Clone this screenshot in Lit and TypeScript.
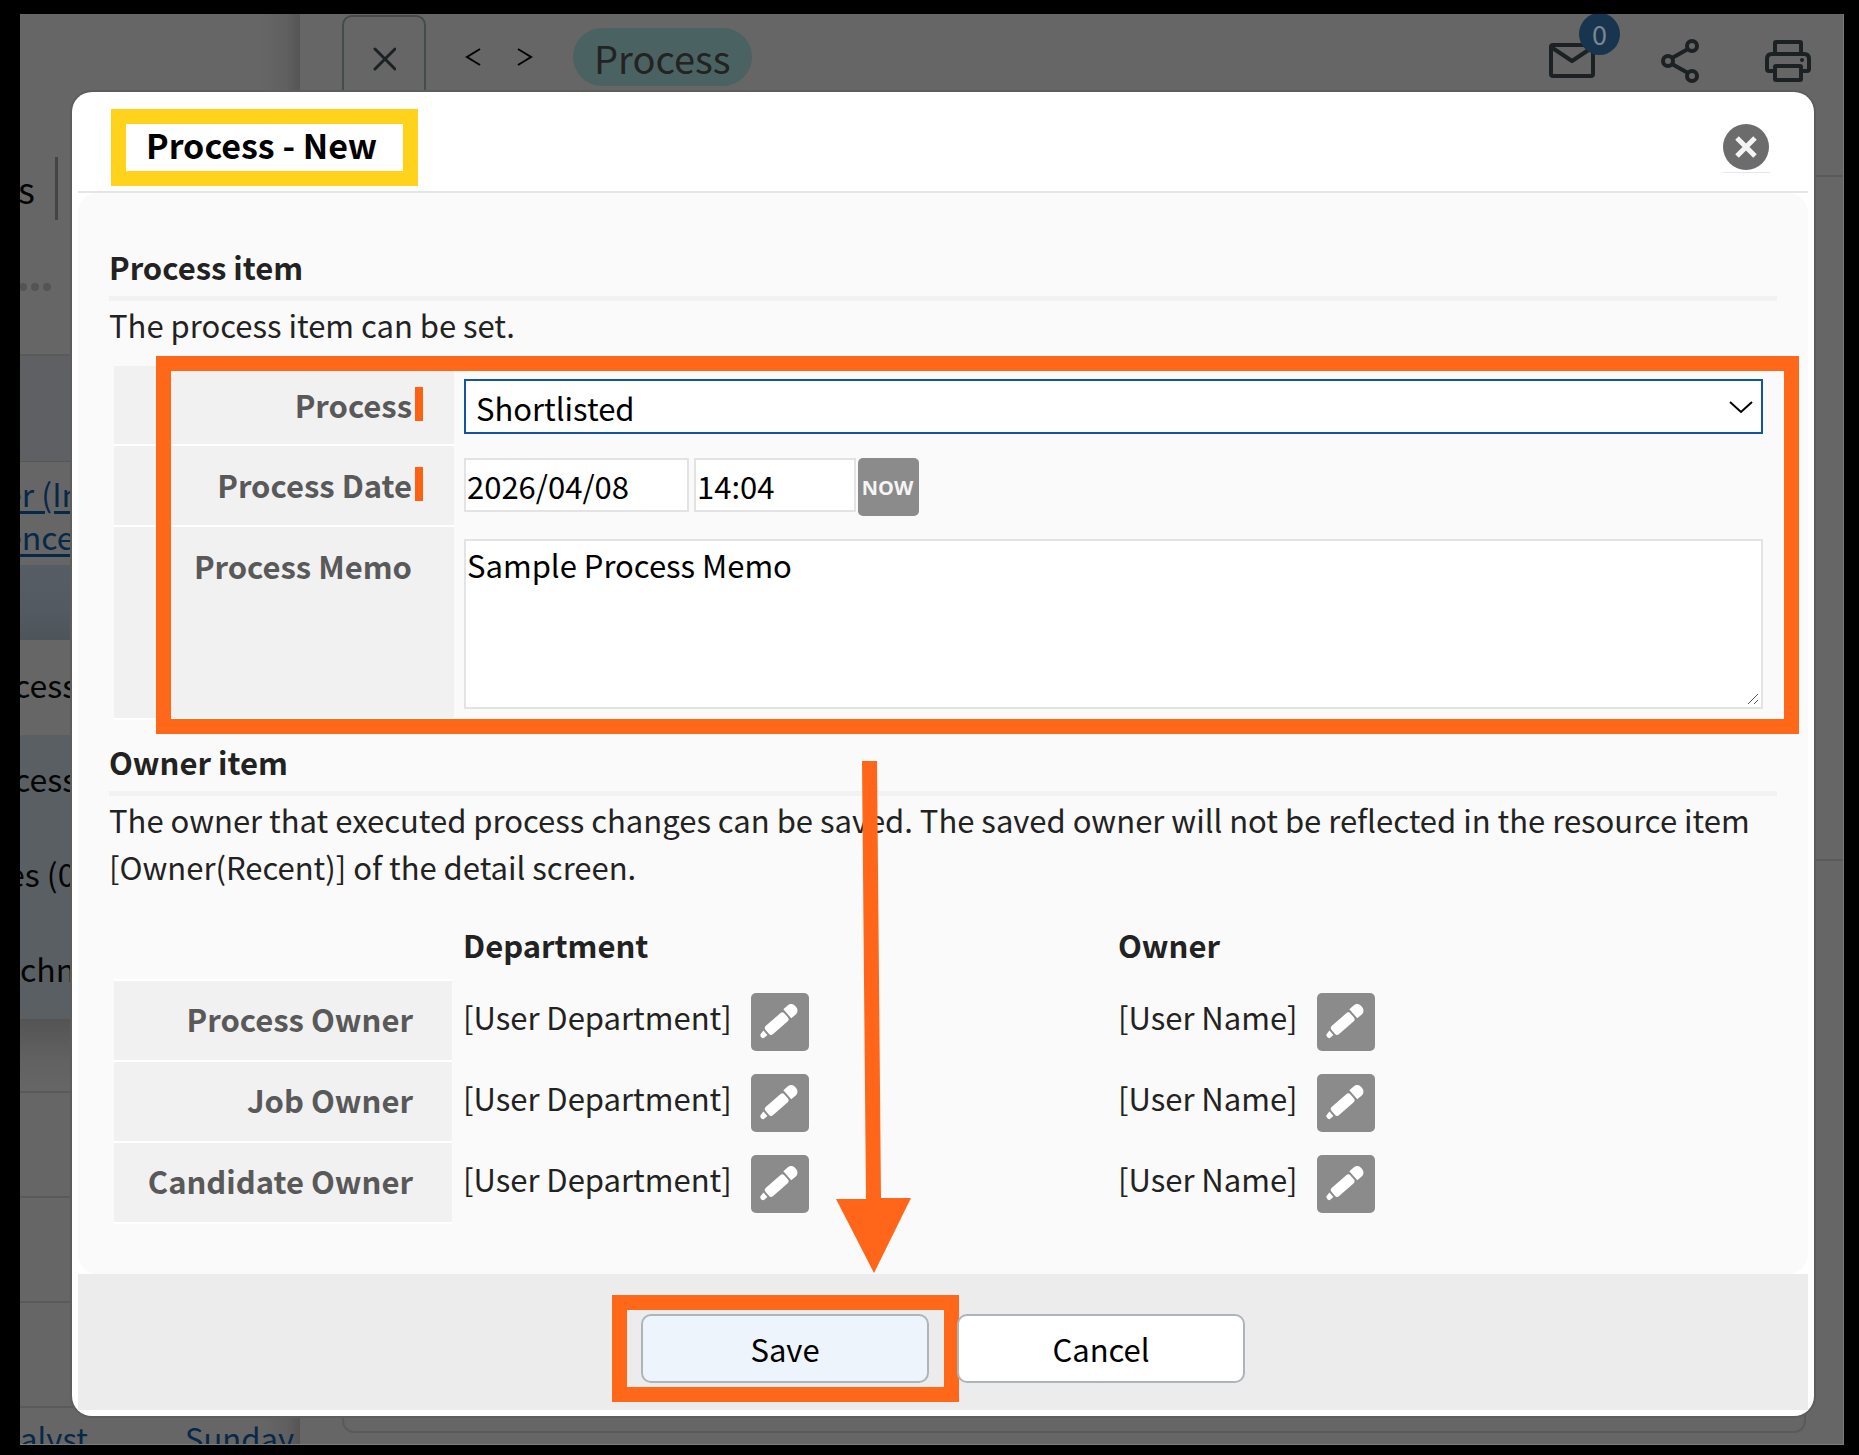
import { LitElement, html, css } from "lit";
import { customElement } from "lit/decorators.js";

const font = css`"Noto Sans CJK JP", "Noto Sans", sans-serif`;

const pencilIcon = html`
  <svg class="pencil" viewBox="0 0 58 58" aria-hidden="true">
    <g transform="translate(28 28) rotate(-41)" fill="#fff">
      <rect x="-16" y="-5" width="25" height="11" rx="3" />
      <path d="M11 -6h6a5 5 0 0 1 5 5v2a5 5 0 0 1-5 5h-6z" />
      <path d="M-18 -3v6l-5 0q-2 -3 0 -5z" />
    </g>
  </svg>
`;

@customElement("backdrop-page")
class BackdropPage extends LitElement {
  static styles = css`
    :host {
      display: grid;
      grid-template-columns: 280px 1fr;
      overflow: hidden;
      background: #666;
      color: #050505;
      font: 32px/48px ${font};
    }
    .side {
      display: flex;
      flex-direction: column;
      overflow: hidden;
      white-space: nowrap;
      min-height: 0;
      background: linear-gradient(to left, #555 0, #606060 14px, #666 40px);
    }
    .top {
      box-sizing: border-box;
      flex: none;
      height: 342px;
      padding-top: 143px;
      border-bottom: 2px solid #5a5a5a;
    }
    .tab {
      display: flex;
      width: 35px;
      height: 63px;
      border-right: 3px solid #444;
      font-size: 36px;
      line-height: 62px;
    }
    .tab span {
      margin-left: -2px;
    }
    .dots {
      display: block;
      width: 32px;
      height: 12px;
      margin-top: 61px;
    }
    .head {
      flex: none;
      height: 105px;
      background: #5e6063;
      border-bottom: 1px solid #565656;
    }
    .links {
      box-sizing: border-box;
      flex: none;
      height: 103px;
      padding-top: 10px;
      line-height: 43px;
    }
    a {
      color: #082848;
      text-decoration-thickness: 3px;
      text-underline-offset: 4px;
    }
    .links a {
      display: block;
      margin-left: -16px;
    }
    .band {
      flex: none;
      height: 75px;
      background: linear-gradient(#565d64, #535a61 60%, #4d545a);
    }
    .item {
      box-sizing: border-box;
      flex: none;
      height: 95px;
      padding-top: 20px;
      margin-left: -6px;
    }
    .group {
      flex: none;
      height: 284px;
      background: #5a5f63;
    }
    .group .item {
      padding-top: 19px;
    }
    .group .wide {
      margin-left: -13px;
    }
    .group .inset {
      margin-left: 0;
    }
    .line {
      box-sizing: border-box;
      flex: none;
      height: 105px;
      border-bottom: 2px solid #5a5a5a;
    }
    .line.first {
      height: 74px;
      background: linear-gradient(#545454, #626262 60%, transparent);
    }
    .last {
      display: grid;
      grid-template-columns: 165px 1fr;
      padding: 5px 0 0;
      font-size: 31px;
      line-height: 50px;
    }
    .last a {
      text-decoration: none;
    }
    .panel {
      display: flex;
      flex-direction: column;
      min-width: 0;
      min-height: 0;
      background: #666;
      border-right: 1px solid #7c7c7c;
    }
    .bar {
      display: flex;
      box-sizing: border-box;
      flex: none;
      height: 163px;
      border-bottom: 2px solid #5a5a5a;
      padding: 1px 31px 0 42px;
    }
    button {
      padding: 0;
      border: 0;
      background: none;
      color: inherit;
      font: inherit;
      flex: none;
    }
    svg {
      display: block;
    }
    .close {
      display: grid;
      place-items: center;
      width: 84px;
      height: 88px;
      box-sizing: border-box;
      border: 2px solid #444c4c;
      border-radius: 10px;
    }
    .nav {
      display: flex;
      gap: 34px;
      margin: 32px 39px 0 38px;
      height: 20px;
    }
    .pill {
      height: 58px;
      margin-top: 13px;
      padding: 0 21px;
      border-radius: 29px;
      background: #4b6262;
      color: #232323;
      font-size: 38px;
      line-height: 60px;
    }
    .tools {
      display: flex;
      align-items: flex-start;
      gap: 64px;
      margin-left: auto;
      padding-top: 23px;
    }
    .mail {
      position: relative;
      margin-top: 4px;
    }
    .badge {
      position: absolute;
      left: 31px;
      top: -29px;
      width: 41px;
      height: 42px;
      border-radius: 50%;
      background: #18344f;
      color: #7d8690;
      font-size: 27px;
      line-height: 42px;
      text-align: center;
    }
    .section {
      flex: none;
      height: 647px;
      border-bottom: 2px solid #5a5a5a;
    }
    .card {
      height: 605px;
      margin: 0 37px 0 42px;
      border: 2px solid #5a5a5a;
      border-top: 0;
      border-radius: 12px;
    }
    .section {
      height: 682px;
    }
    .card {
      height: 570px;
    }
  `;

  render() {
    return html`
      <div class="side">
        <div class="top">
          <div class="tab"><span>s</span></div>
          <svg class="dots" viewBox="0 0 32 12" fill="#545454" aria-hidden="true">
            <circle cx="3" cy="6" r="4" />
            <circle cx="15" cy="6" r="4" />
            <circle cx="27" cy="6" r="4" />
          </svg>
        </div>
        <div class="head"></div>
        <div class="links">
          <a href="#">er (In</a>
          <a href="#">ence</a>
        </div>
        <div class="band"></div>
        <div class="item">cess</div>
        <div class="group">
          <div class="item">cess</div>
          <div class="item wide">es (0</div>
          <div class="item inset">chn</div>
        </div>
        <div class="line first"></div>
        <div class="line"></div>
        <div class="line"></div>
        <div class="line"></div>
        <div class="last"><a href="#">alyst</a><a href="#">Sunday</a></div>
      </div>
      <div class="panel">
        <div class="bar">
          <button class="close" aria-label="Close panel">
            <svg width="24" height="24" viewBox="0 0 24 24" stroke="#1c2124" stroke-width="3" stroke-linecap="round">
              <path d="M3 2 23 22M23 2 3 22" />
            </svg>
          </button>
          <div class="nav">
            <button aria-label="Previous">
              <svg width="18" height="20" viewBox="0 0 18 20" fill="none" stroke="#000" stroke-width="2"><path d="M16 2 3 10 16 18" /></svg>
            </button>
            <button aria-label="Next">
              <svg width="18" height="20" viewBox="0 0 18 20" fill="none" stroke="#000" stroke-width="2"><path d="M2 2 15 10 2 18" /></svg>
            </button>
          </div>
          <span class="pill">Process</span>
          <div class="tools">
            <button class="mail" aria-label="Mail">
              <svg width="48" height="36" viewBox="0 0 48 36" fill="none" stroke="#1c2124" stroke-width="4" stroke-linejoin="round">
                <rect x="3" y="3" width="42" height="31" rx="2" />
                <path d="M3 5 24 19 45 5" />
              </svg>
              <span class="badge">0</span>
            </button>
            <button aria-label="Share">
              <svg width="40" height="46" viewBox="0 0 40 46" fill="none" stroke="#1c2124" stroke-width="4">
                <circle cx="32" cy="8" r="5" />
                <circle cx="8" cy="23" r="5" />
                <circle cx="32" cy="38" r="5" />
                <path d="M12 20 28 11M12 26 28 35" />
              </svg>
            </button>
            <button aria-label="Print">
              <svg width="48" height="46" viewBox="0 0 48 46" fill="none" stroke="#1c2124" stroke-width="4" stroke-linejoin="round">
                <path d="M11 16V5q0 -1 1 -1h24q1 0 1 1v11" />
                <path d="M11 33H5q-2 0 -2 -2V21q0 -5 5 -5h32q5 0 5 5v10q0 2 -2 2h-6" />
                <rect x="11" y="28" width="26" height="14" rx="1" />
                <circle cx="38" cy="22" r="2" fill="#1c2124" stroke="none" />
              </svg>
            </button>
          </div>
        </div>
        <div class="section"></div>
        <div class="card"></div>
      </div>
    `;
  }
}

@customElement("process-dialog")
class ProcessDialog extends LitElement {
  static styles = css`
    :host {
      display: block;
      box-sizing: border-box;
      padding: 0 6px 6px;
      border-radius: 20px;
      background: #fff;
      box-shadow: 0 0 0 2px #5d5d5d;
      color: #222;
      font: 31px/48px ${font};
    }
    header {
      display: flex;
      align-items: flex-start;
      justify-content: space-between;
      padding: 17px 38px 5px 33px;
      border-bottom: 2px solid #e5e5e5;
    }
    h1,
    h2 {
      margin: 0;
      font-size: 31px;
      font-weight: 700;
    }
    h1 {
      padding: 0 26px 5px 20px;
      border: 15px solid #ffd21c;
      color: #000;
      font-size: 34px;
      line-height: 42px;
    }
    h2 {
      padding: 1px 0 5px;
      border-bottom: 5px solid #f2f2f2;
    }
    p {
      margin: 0;
      line-height: 47px;
    }
    button,
    input,
    select,
    textarea {
      box-sizing: border-box;
      margin: 0;
      border-radius: 0;
      color: #000;
      font: inherit;
      line-height: normal;
    }
    svg {
      display: block;
    }
    .dismiss {
      margin-top: 14px;
      padding: 0 0 1px;
      border: 0;
      border-bottom: 1px solid #e3e8f0;
      background: none;
    }
    .body {
      padding: 49px 31px 50px;
      border-radius: 20px;
      background: #fafafa;
    }
    .form {
      position: relative;
      margin: 18px 0 17px 5px;
    }
    .row {
      display: grid;
      grid-template-columns: 340px 1fr;
      min-height: 80px;
    }
    .label {
      display: flex;
      justify-content: flex-end;
      gap: 3px;
      padding: 15px 31px 0 0;
      border-bottom: 2px solid #fff;
      background: #f1f1f1;
      color: #595959;
      font-weight: 700;
    }
    .label.optional {
      padding-right: 42px;
    }
    .required {
      width: 8px;
      height: 34px;
      margin-top: 6px;
      background: #ff6112;
    }
    .field {
      display: flex;
      align-items: flex-start;
      padding: 12px 14px 11px 10px;
    }
    .picker {
      display: grid;
      flex: 1;
      align-items: center;
      padding-top: 1px;
    }
    .picker > * {
      grid-area: 1 / 1;
    }
    select {
      width: 100%;
      height: 55px;
      padding: 2px 48px 0 10px;
      border: 2px solid #1156a0;
      background: #fff;
      appearance: none;
      outline: 0;
    }
    .chevron {
      justify-self: end;
      margin: 0 10px 0 0;
      pointer-events: none;
    }
    input,
    textarea {
      padding: 0 0 0 1px;
      border: 2px solid #e3e3e3;
      background: #fff;
    }
    input {
      height: 54px;
    }
    .date {
      width: 225px;
      margin-right: 5px;
    }
    .time {
      width: 162px;
      margin-right: 2px;
    }
    .now {
      width: 61px;
      height: 58px;
      padding: 0 2px 0 0;
      border: 0;
      border-radius: 5px;
      background: #8b8b8b;
      color: #f5f5f5;
      font: 700 20px "Open Sans", sans-serif;
    }
    .memo {
      position: relative;
      display: flex;
      flex: 1;
    }
    textarea {
      flex: 1;
      height: 170px;
      padding-top: 1px;
      resize: none;
    }
    .grip {
      position: absolute;
      right: 4px;
      bottom: 4px;
      pointer-events: none;
    }
    .mark {
      position: absolute;
      inset: -10px -22px -14px 42px;
      border: 15px solid rgba(255, 98, 18, 0.97);
      pointer-events: none;
    }
    table {
      width: calc(100% - 5px);
      margin: 31px 0 0 5px;
      border-spacing: 0;
      table-layout: fixed;
    }
    th,
    td {
      padding: 0;
      text-align: left;
      vertical-align: top;
    }
    thead th {
      height: 60px;
      padding-left: 11px;
      box-sizing: border-box;
    }
    .names {
      width: 338px;
    }
    .dept {
      width: 655px;
    }
    thead .names {
      border-bottom: 2px solid #fff;
    }
    tbody th {
      padding: 14px 39px 0 0;
      border-bottom: 2px solid #fff;
      background: #f1f1f1;
      color: #595959;
      text-align: right;
    }
    .value {
      display: flex;
      gap: 19px;
      padding: 12px 0 11px 11px;
      line-height: 48px;
    }
    .edit {
      width: 58px;
      height: 58px;
      padding: 0;
      border: 0;
      border-radius: 5px;
      background: #8b8b8b;
    }
    footer {
      position: relative;
      display: flex;
      justify-content: center;
      gap: 28px;
      padding: 40px 0 27px;
      background: #ececec;
    }
    .action {
      position: relative;
      display: flex;
    }
    .action button {
      width: 288px;
      height: 69px;
      padding-bottom: 2px;
      border: 2px solid #aeb5b9;
      border-radius: 10px;
      background: #fff;
    }
    .action .primary {
      background: #edf4fc;
    }
    .action .mark {
      inset: -19px -30px -19px -29px;
    }
    .arrow {
      position: absolute;
      right: calc(50% + 32px);
      bottom: calc(100% + 1px);
      pointer-events: none;
    }
  `;

  private owners = ["Process Owner", "Job Owner", "Candidate Owner"];

  private value(text: string, label: string) {
    return html`
      <div class="value">
        <span>${text}</span>
        <button class="edit" aria-label=${label}>${pencilIcon}</button>
      </div>
    `;
  }

  render() {
    return html`
      <header>
        <h1>Process - New</h1>
        <button class="dismiss" aria-label="Close">
          <svg width="47" height="48" viewBox="0 0 47 48">
            <circle cx="23" cy="24" r="23" fill="#6c6c6c" />
            <path d="M14 15 32 33M32 15 14 33" stroke="#f4f4f4" stroke-width="5" />
          </svg>
        </button>
      </header>
      <div class="body">
        <h2>Process item</h2>
        <p>The process item can be set.</p>
        <div class="form">
          <div class="row">
            <label class="label" for="process">Process<span class="required"></span></label>
            <div class="field">
              <div class="picker">
                <select id="process">
                  <option>Shortlisted</option>
                </select>
                <svg class="chevron" width="24" height="14" viewBox="0 0 24 14" fill="none" stroke="#000" stroke-width="2">
                  <path d="M1 2 12 12 23 2" />
                </svg>
              </div>
            </div>
          </div>
          <div class="row">
            <label class="label" for="date">Process Date<span class="required"></span></label>
            <div class="field">
              <input id="date" class="date" value="2026/04/08" />
              <input class="time" aria-label="Process time" value="14:04" />
              <button class="now">NOW</button>
            </div>
          </div>
          <div class="row">
            <label class="label optional" for="memo">Process Memo</label>
            <div class="field">
              <div class="memo">
                <textarea id="memo" .value=${"Sample Process Memo"}></textarea>
                <svg class="grip" width="12" height="12" viewBox="0 0 12 12" stroke="#555" aria-hidden="true">
                  <path d="M1 11 11 1M7 11 11 7" />
                </svg>
              </div>
            </div>
          </div>
          <div class="mark"></div>
        </div>
        <h2>Owner item</h2>
        <p>
          The owner that executed process changes can be saved. The saved owner will not be reflected in the resource
          item [Owner(Recent)] of the detail screen.
        </p>
        <table>
          <thead>
            <tr>
              <th class="names"></th>
              <th class="dept">Department</th>
              <th>Owner</th>
            </tr>
          </thead>
          <tbody>
            ${this.owners.map(
              (name) => html`
                <tr>
                  <th scope="row">${name}</th>
                  <td>${this.value("[User Department]", `Edit department, ${name}`)}</td>
                  <td>${this.value("[User Name]", `Edit owner, ${name}`)}</td>
                </tr>
              `
            )}
          </tbody>
        </table>
      </div>
      <footer>
        <div class="action">
          <button class="primary">Save</button>
          <div class="mark"></div>
        </div>
        <div class="action"><button>Cancel</button></div>
        <svg class="arrow" width="75" height="512" viewBox="0 0 75 512" fill="#ff6619" aria-hidden="true">
          <path d="M26 0H41L45 437H75L38 512 0 438H30z" />
        </svg>
      </footer>
    `;
  }
}

@customElement("app-root")
class AppRoot extends LitElement {
  static styles = css`
    :host {
      display: block;
      box-sizing: border-box;
      min-height: 100vh;
      padding: 14px 15px 10px 20px;
      background: #000;
    }
    .screen {
      position: relative;
      padding: 78px 30px 28px 52px;
      border-bottom: 1px solid #7c7c7c;
    }
    backdrop-page {
      position: absolute;
      inset: 0;
    }
    process-dialog {
      position: relative;
    }
  `;

  render() {
    return html`
      <div class="screen">
        <backdrop-page></backdrop-page>
        <process-dialog role="dialog" aria-label="Process - New"></process-dialog>
      </div>
    `;
  }
}
